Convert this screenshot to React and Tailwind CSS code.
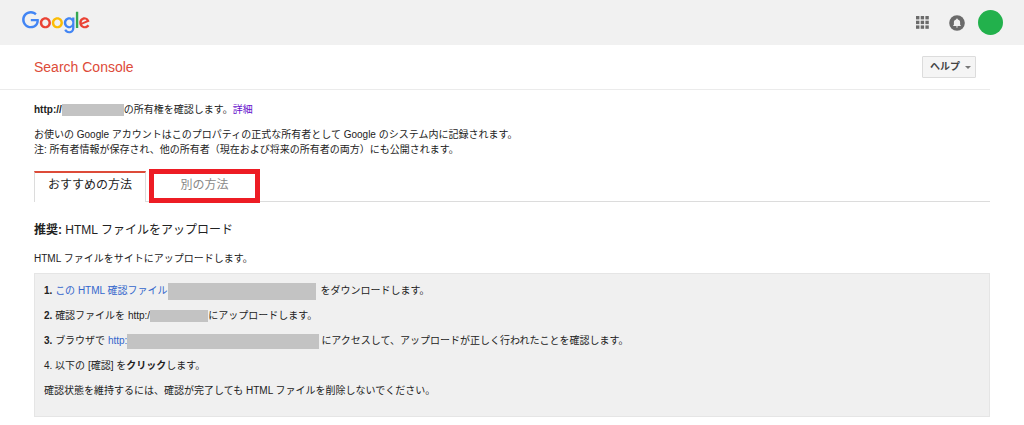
import React from "react";

function GoogleLogo() {
  return (
    <svg viewBox="0 0 272 92" className="h-[23px] w-[68px]" role="img" aria-label="Google">
      <path fill="#EA4335" d="M115.75 47.18c0 12.77-9.99 22.18-22.25 22.18s-22.25-9.41-22.25-22.18C71.25 34.32 81.24 25 93.5 25s22.25 9.32 22.25 22.18zm-9.74 0c0-7.98-5.79-13.44-12.51-13.44S80.99 39.2 80.99 47.18c0 7.9 5.79 13.44 12.51 13.44s12.51-5.55 12.51-13.44z" />
      <path fill="#FBBC05" d="M163.75 47.18c0 12.77-9.99 22.18-22.25 22.18s-22.25-9.41-22.25-22.18c0-12.85 9.99-22.18 22.25-22.18s22.25 9.32 22.25 22.18zm-9.74 0c0-7.98-5.79-13.44-12.51-13.44s-12.51 5.46-12.51 13.44c0 7.9 5.79 13.44 12.51 13.44s12.51-5.55 12.51-13.44z" />
      <path fill="#4285F4" d="M209.75 26.34v39.82c0 16.38-9.66 23.07-21.08 23.07-10.75 0-17.22-7.19-19.66-13.07l8.48-3.53c1.51 3.61 5.21 7.87 11.17 7.87 7.31 0 11.84-4.51 11.84-13v-3.19h-.34c-2.18 2.69-6.38 5.04-11.68 5.04-11.09 0-21.25-9.66-21.25-22.09 0-12.52 10.16-22.26 21.25-22.26 5.29 0 9.49 2.35 11.68 4.96h.34v-3.61h9.25zm-8.56 20.92c0-7.81-5.21-13.52-11.84-13.52-6.72 0-12.35 5.71-12.35 13.52 0 7.73 5.63 13.36 12.35 13.36 6.63 0 11.84-5.63 11.84-13.36z" />
      <path fill="#34A853" d="M225 3v65h-9.5V3h9.5z" />
      <path fill="#EA4335" d="M262.02 54.48l7.56 5.04c-2.44 3.61-8.32 9.83-18.48 9.83-12.6 0-22.01-9.74-22.01-22.18 0-13.19 9.49-22.18 20.92-22.18 11.51 0 17.14 9.16 18.98 14.11l1.01 2.52-29.65 12.28c2.27 4.45 5.8 6.72 10.75 6.72 4.96 0 8.4-2.44 10.92-6.14zm-23.27-7.98l19.82-8.23c-1.09-2.77-4.37-4.7-8.23-4.7-4.95 0-11.84 4.37-11.59 12.93z" />
      <path fill="#4285F4" d="M35.29 41.41V32H67c.31 1.64.47 3.58.47 5.68 0 7.06-1.93 15.79-8.15 22.01-6.05 6.3-13.78 9.66-24.02 9.66C16.32 69.35.36 53.89.36 34.91.36 15.93 16.32.47 35.3.47c10.5 0 17.98 4.12 23.6 9.49l-6.64 6.64c-4.03-3.78-9.49-6.72-16.97-6.72-13.86 0-24.7 11.17-24.7 25.03 0 13.86 10.84 25.03 24.7 25.03 8.99 0 14.11-3.61 17.39-6.89 2.66-2.66 4.41-6.46 5.1-11.65l-22.49.01z" />
    </svg>
  );
}

function AppsIcon() {
  return (
    <svg viewBox="0 0 13 13" className="size-[13px] fill-[#6b6b6b]" aria-hidden="true">
      {[0, 4.7, 9.4].map((y) => [0, 4.7, 9.4].map((x) => <rect key={`${x}-${y}`} x={x} y={y} width="3.4" height="3.4" />))}
    </svg>
  );
}

function BellIcon() {
  return (
    <svg viewBox="0 0 16 16" className="size-4" aria-hidden="true">
      <circle cx="8" cy="8" r="7.8" fill="#6b6b6b" />
      <path fill="#f1f1f1" d="M8 3.400c-.5 0-.8.3-.8.8v.2C5.600 4.800 4.900 5.900 4.900 7.200v2.500l-.7.700v.7h7.600v-.7l-.7-.7V7.200c0-1.300-.7-2.400-2.300-2.800v-.2c0-.5-.3-.8-.8-.8zM7 11.600c0 .6.4 1 1 1s1-.4 1-1z" />
    </svg>
  );
}

const link = "text-[#3366cc]";
const row = "flex min-h-4 flex-wrap items-center whitespace-pre";

export default function App() {
  return (
    <div className="min-h-screen bg-white pb-2 font-['Liberation_Sans','Noto_Sans_CJK_JP',sans-serif] text-[10px] leading-4 text-[#222]">
      <header className="flex h-[45px] items-center justify-between bg-[#f1f1f1] pl-[22px] pr-[21px]">
        <a href="#" className="block"><GoogleLogo /></a>
        <div className="flex items-center">
          <button type="button" aria-label="アプリ" className="mr-5"><AppsIcon /></button>
          <button type="button" aria-label="通知" className="mr-[13px]"><BellIcon /></button>
          <button type="button" aria-label="アカウント" className="size-[25px] rounded-full bg-[#22b14c]" />
        </div>
      </header>

      <div className="mr-[34px]">
        <div className="flex h-[45px] items-center justify-between border-b border-[#ebebeb] pl-[34px] pr-[14px]">
          <h1 className="text-sm text-[#dd4b39]">Search Console</h1>
          <button type="button" aria-haspopup="menu" className="flex h-[22px] items-center gap-[5px] rounded-[1px] border border-[#dcdcdc] bg-[#f5f5f5] pl-[7px] pr-1 font-bold text-[#444]">
            ヘルプ
            <svg viewBox="0 0 6 3" className="h-[3px] w-[6px] fill-[#777]" aria-hidden="true"><path d="M0 0h6L3 3z" /></svg>
          </button>
        </div>

        <main className="pl-[34px]">
          <p className="mt-3 flex flex-wrap items-center">
            <b>http://</b>
            <span className="h-3 w-[62px] bg-[#c3c3c3]" />
            の所有権を確認します。
            <a href="#" className="text-[#6611cc]">詳細</a>
          </p>
          <p className="mt-[9px] leading-[15px]">
            お使いの Google アカウントはこのプロパティの正式な所有者として Google のシステム内に記録されます。
            <br />
            注: 所有者情報が保存され、他の所有者（現在および将来の所有者の両方）にも公開されます。
          </p>

          <div role="tablist" className="mt-[14px] flex h-[31px] border-b border-[#dcdcdc] text-xs">
            <button type="button" role="tab" aria-selected="true" className="-mb-px w-28 border-x border-t-2 border-x-[#dcdcdc] border-t-[#dd4b39] bg-white pb-[5px] text-[#222]">
              おすすめの方法
            </button>
            <button type="button" role="tab" aria-selected="false" className="relative ml-[3px] w-[111px] pb-[2px] text-[#888]">
              別の方法
              <span className="absolute inset-x-0 -top-[2px] -bottom-[2px] border-[5px] border-[#ed1c24]" />
            </button>
          </div>

          <h2 className="mt-5 text-xs leading-4"><b>推奨:</b> HTML ファイルをアップロード</h2>
          <p className="mt-[13px]">HTML ファイルをサイトにアップロードします。</p>

          <section className="mt-[6px] border border-[#e5e5e5] bg-[#f0f0f0] px-[9px] pt-[9px] pb-[17px]">
            <ol className="flex flex-col gap-[9px]">
              <li className={row}>
                <b>1. </b>
                <a href="#" className={link}>この HTML 確認ファイル</a>
                <span className="-my-px mr-[5px] h-[17px] w-[148px] bg-[#c3c3c3]" />
                をダウンロードします。
              </li>
              <li className={row}>
                <b>2. </b>
                確認ファイルを http:/
                <span className="h-3 w-[58px] bg-[#c3c3c3]" />
                にアップロードします。
              </li>
              <li className={row}>
                <b>3. </b>
                {"ブラウザで "}
                <a href="#" className={link}>http:</a>
                <span className="mr-[2px] h-[15px] w-48 bg-[#c3c3c3]" />
                にアクセスして、アップロードが正しく行われたことを確認します。
              </li>
              <li className={row}>
                {"4. 以下の [確認] を"}
                <b>クリック</b>
                します。
              </li>
            </ol>
            <p className="mt-[9px]">確認状態を維持するには、確認が完了しても HTML ファイルを削除しないでください。</p>
          </section>
        </main>
      </div>
    </div>
  );
}
